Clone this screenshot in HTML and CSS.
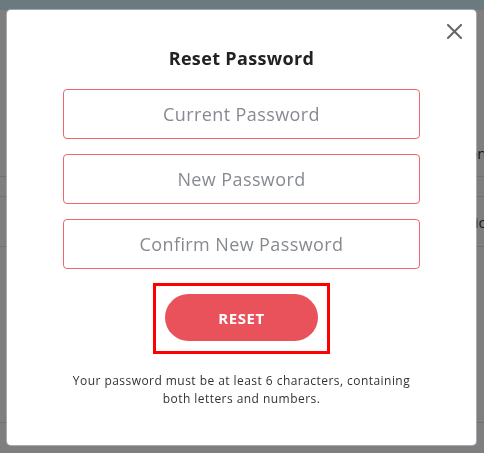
FILE: index.html
```html
<!DOCTYPE html>
<html lang="en">
<head>
  <meta charset="UTF-8">
  <title>Reset Password</title>
  <link rel="stylesheet" href="styles.css">
</head>
<body>
<!-- page behind the dialog -->
<div class="page">
  <div class="page-header"></div>
  <div class="page-table">
    <div class="row row-tall"><span class="cell cell-phone">Phone</span></div>
    <div class="row row-thin"></div>
    <div class="row row-tall2"><span class="cell cell-loc">Location</span></div>
    <div class="row row-rest"></div>
  </div>
</div>

<div class="backdrop"></div>

<!-- reset password dialog -->
<div class="modal">
  <span class="close">
    <svg width="15" height="15" viewBox="0 0 15 15">
      <path d="M1 1 L14 14 M14 1 L1 14" stroke="#666" stroke-width="2" stroke-linecap="square" fill="none"/>
    </svg>
  </span>
  <h3 class="modal-title">Reset Password</h3>
  <form class="reset-form">
    <input type="password" placeholder="Current Password">
    <input type="password" placeholder="New Password">
    <input type="password" placeholder="Confirm New Password">
    <div class="highlight">
      <button type="submit">RESET</button>
    </div>
  </form>
  <p class="hint">Your password must be at least 6 characters, containing<br>both letters and numbers.</p>
</div>
</body>
</html>
```

FILE: styles.css
```css
body {
  margin: 0;
  font-family: "Open Sans", "Liberation Sans", sans-serif;
  background-color: #fff;
}

/* page behind */
.page-header {
  height: 10px;
  background-color: #d6f4fe;
}

.page-table {
  padding-top: 120px;
}

.row {
  border-bottom: 1px solid #e2e2e2;
  display: flex;
  align-items: center;
  font-size: 15px;
  color: #333;
}

.row-tall { height: 46px; }
.row-thin { height: 19px; }
.row-tall2 { height: 49px; }
.row-rest { height: 175px; }

.cell-phone { padding-left: 450px; }
.cell-loc { padding-left: 437px; }

.backdrop {
  position: fixed;
  inset: 0;
  background-color: rgba(0, 0, 0, 0.5);
}

/* dialog */
.modal {
  position: fixed;
  top: 10px;
  left: 7px;
  width: 469px;
  height: 435px;
  box-sizing: border-box;
  padding: 36px 56px 0;
  background-color: #fff;
  border-radius: 4px;
  box-shadow: 0 0 0 1px rgba(200, 215, 235, 0.5);
}

.close {
  position: absolute;
  top: 14px;
  right: 14px;
  width: 15px;
  height: 15px;
  cursor: pointer;
}

.close svg {
  display: block;
}

.modal-title {
  margin: 0 0 19px;
  text-align: center;
  font-size: 18px;
  line-height: 24px;
  font-weight: 700;
  letter-spacing: 0.35px;
  color: #222;
}

.reset-form input {
  display: block;
  width: 100%;
  height: 50px;
  box-sizing: border-box;
  margin: 0 0 15px;
  border: 1px solid #f0656c;
  border-radius: 4px;
  font-family: inherit;
  font-size: 18px;
  letter-spacing: 0.4px;
  text-align: center;
  outline: none;
}

.reset-form input:last-of-type {
  margin-bottom: 14px;
}

.reset-form input::placeholder {
  color: #868a90;
}

.highlight {
  width: 177px;
  box-sizing: border-box;
  margin: 0 auto;
  padding: 8px 9px 10px;
  border: 3px solid #ff0000;
}

.highlight button {
  display: block;
  width: 153px;
  height: 47px;
  border: none;
  border-radius: 24px;
  background-color: #e9525a;
  color: #fff;
  font-family: inherit;
  font-size: 15px;
  font-weight: 700;
  letter-spacing: 0.6px;
  cursor: pointer;
}

.hint {
  margin: 18px 0 0;
  text-align: center;
  font-size: 12px;
  line-height: 18px;
  letter-spacing: 0.45px;
  color: #333;
}
```
